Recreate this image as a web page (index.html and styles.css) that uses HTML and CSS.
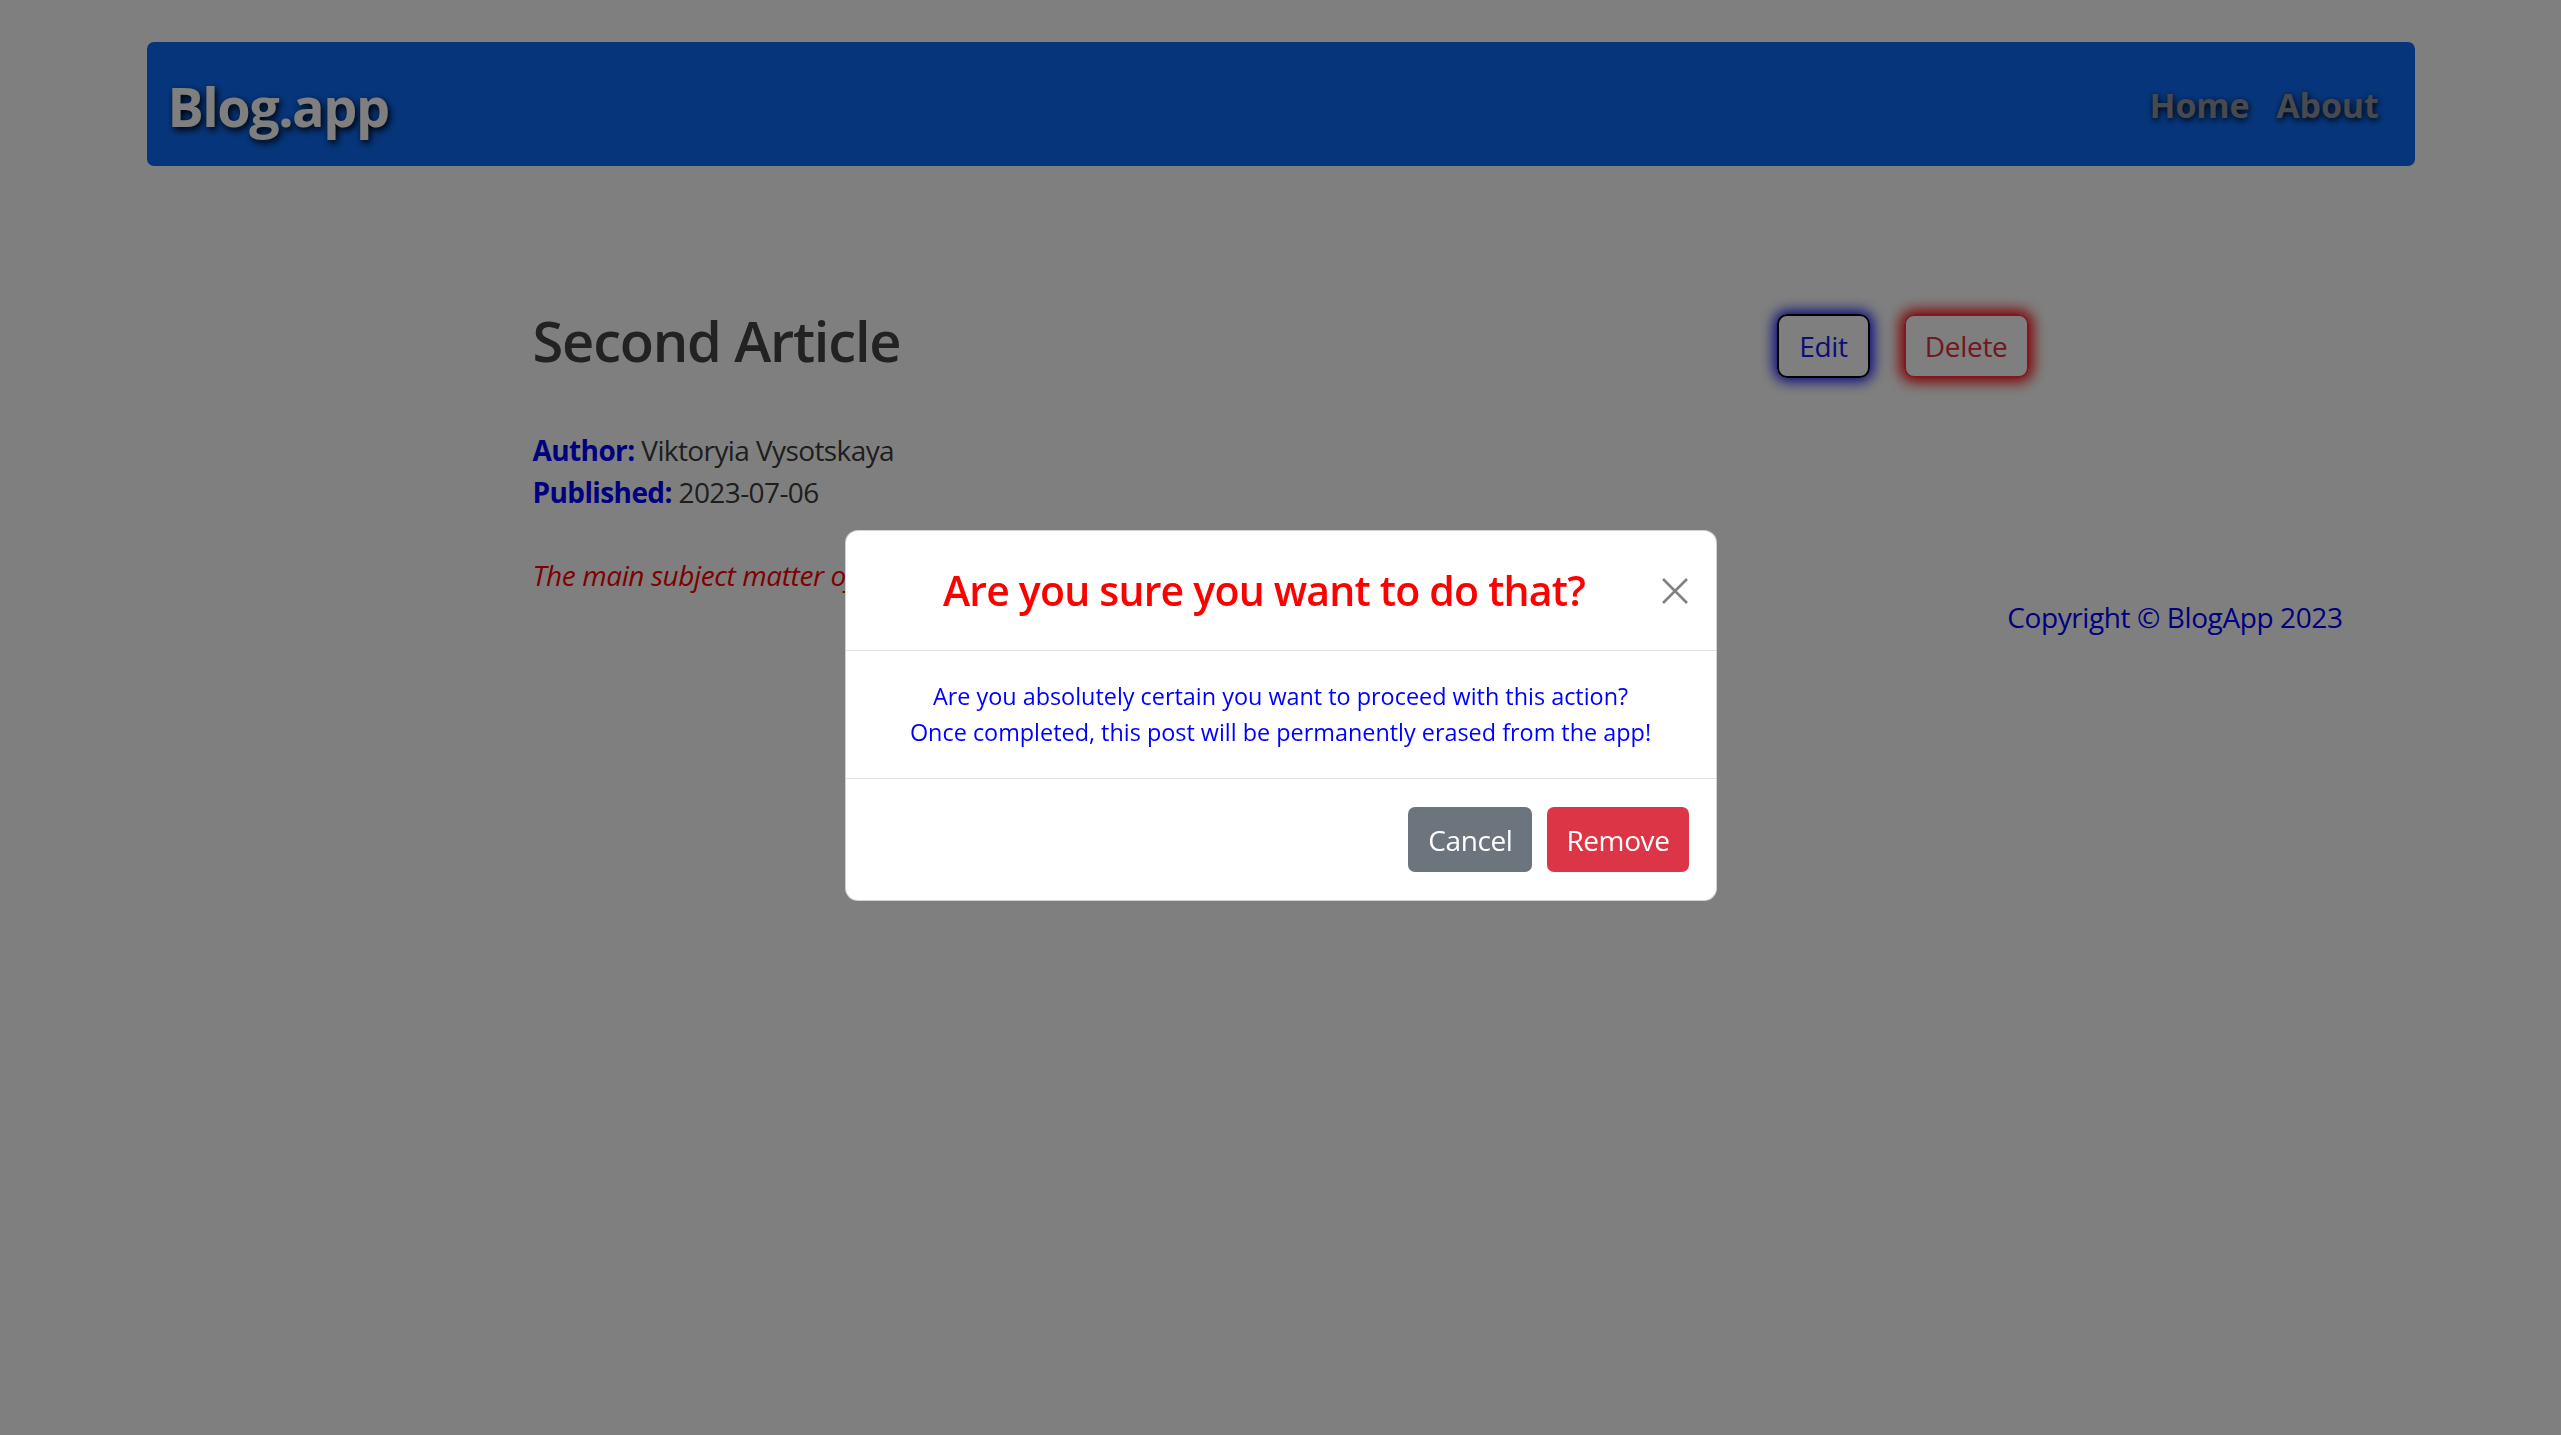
FILE: index.html
```html
<!DOCTYPE html>
<html lang="en">
<head>
<meta charset="utf-8">
<title>Blog.app</title>
<link rel="stylesheet" href="styles.css">
</head>
<body>
<div class="page">
  <nav class="navbar">
    <a class="brand" href="#">Blog.app</a>
    <div class="nav-links">
      <a href="#">Home</a>
      <a href="#">About</a>
    </div>
  </nav>
  <main class="article">
    <div class="article-head">
      <h2 class="article-title">Second Article</h2>
      <div class="article-actions">
        <button class="btn-edit">Edit</button>
        <button class="btn-delete">Delete</button>
      </div>
    </div>
    <div class="meta">
      <div><b class="label">Author:</b> Viktoryia Vysotskaya</div>
      <div><b class="label">Published:</b> 2023-07-06</div>
    </div>
    <p class="summary">The main subject matter of the second article</p>
  </main>
  <footer class="footer">Copyright © BlogApp 2023</footer>
</div>

<div class="backdrop"></div>
<div class="modal-wrap">
  <div class="modal">
    <div class="modal-header">
      <h4 class="modal-title">Are you sure you want to do that?</h4>
      <button class="btn-close" aria-label="Close">
        <svg viewBox="0 0 28 28" width="28" height="28"><path d="M2 2 L26 26 M26 2 L2 26" stroke="#808080" stroke-width="2.6" fill="none"/></svg>
      </button>
    </div>
    <div class="modal-body">Are you absolutely certain you want to proceed with this action?<br>Once completed, this post will be permanently erased from the app!</div>
    <div class="modal-footer">
      <button class="btn btn-cancel">Cancel</button>
      <button class="btn btn-remove">Remove</button>
    </div>
  </div>
</div>
</body>
</html>
```
FILE: styles.css
```css
* { box-sizing: border-box; }
html, body { margin: 0; padding: 0; }
body {
  background: #fff;
  font-family: "Open Sans", "Noto Sans", sans-serif;
  font-size: 28px;
  line-height: 42px;
  letter-spacing: -0.4px;
  color: #3c3c3c;
  width: 2561px;
  height: 1435px;
  overflow: hidden;
}
.page {
  width: 2268px;
  margin: 42px auto 0;
}
.navbar {
  height: 124px;
  background: #0d6bf6;
  border-radius: 7px;
  display: flex;
  align-items: center;
  justify-content: space-between;
  padding: 0 36px 0 21px;
}
.brand {
  color: #fff;
  text-decoration: none;
  font-weight: 700;
  font-size: 54px;
  letter-spacing: -1.5px;
  text-shadow: 2px 3px 7px #000;
  margin-top: 4px;
}
.nav-links { display: flex; gap: 27px; margin-top: 2px; }
.nav-links a {
  color: #8e92a0;
  text-decoration: none;
  font-weight: 700;
  font-size: 34px;
  letter-spacing: -0.2px;
  text-shadow: 1px 2px 6px #000;
}
.article {
  width: 1496px;
  margin: 141px auto 0;
}
.article-head {
  display: flex;
  justify-content: space-between;
  align-items: flex-start;
}
.article-title {
  margin: 0;
  font-size: 56px;
  line-height: 67px;
  font-weight: 600;
  color: #444;
  letter-spacing: -1.2px;
}
.article-actions { display: flex; gap: 34px; margin-top: 7px; }
.article-actions button {
  height: 64px;
  font-family: inherit;
  font-size: 28px;
  letter-spacing: -0.3px;
  background: transparent;
  border-radius: 10px;
  padding: 0 19px;
  cursor: pointer;
}
.article-actions .btn-edit { padding: 0 20px; }
.btn-edit {
  color: #1a1aee;
  border: 2px solid #000;
  box-shadow: 0 0 14px 3px #0000ff;
}
.btn-delete {
  color: #e03040;
  border: 2px solid #ff3040;
  box-shadow: 0 0 14px 4px #ff0000;
}
.meta { margin-top: 51px; letter-spacing: -0.6px; }
.label { color: #0000ff; font-weight: 700; }
.summary {
  margin: 41px 0 0;
  font-style: italic;
  color: #ff0000;
}
.footer {
  text-align: right;
  padding-right: 72px;
  color: #0000ff;
}
.backdrop {
  position: fixed;
  inset: 0;
  background: rgba(0, 0, 0, 0.5);
}
.modal-wrap {
  position: fixed;
  inset: 0;
  display: flex;
  align-items: center;
  justify-content: center;
}
.modal {
  width: 872px;
  background: #fff;
  border: 1px solid rgba(0, 0, 0, 0.175);
  border-radius: 13px;
  margin-top: -4px;
  letter-spacing: 0;
}
.modal-header {
  display: flex;
  align-items: center;
  padding: 28px 27px;
  border-bottom: 1px solid #dee2e6;
}
.modal-title {
  flex: 1;
  margin: 0;
  text-align: center;
  font-size: 41px;
  line-height: 63px;
  font-weight: 600;
  color: #ff0000;
  letter-spacing: -0.8px;
}
.btn-close {
  width: 28px;
  height: 28px;
  padding: 0;
  margin-left: 5px;
  border: 0;
  background: transparent;
  display: flex;
}
.modal-body {
  padding: 28px;
  text-align: center;
  font-size: 23.4px;
  line-height: 35.5px;
  color: #0000ff;
}
.modal-footer {
  display: flex;
  justify-content: flex-end;
  gap: 15px;
  padding: 28px 27px;
  border-top: 1px solid #dee2e6;
}
.btn {
  height: 65px;
  border: 0;
  border-radius: 7px;
  color: #fff;
  font-family: inherit;
  font-size: 28px;
  letter-spacing: -0.4px;
  padding: 0 19px;
}
.btn-cancel { background: #6c757d; padding: 0 20px; }
.btn-remove { background: #dc3545; }
```
